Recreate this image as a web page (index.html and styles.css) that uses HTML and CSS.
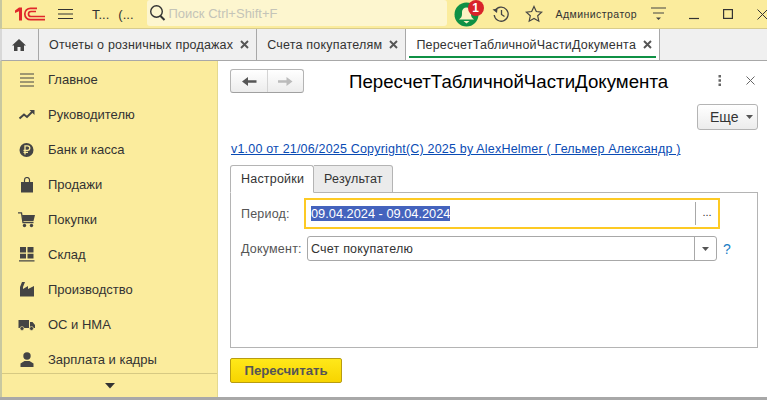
FILE: index.html
```html
<!DOCTYPE html>
<html lang="ru">
<head>
<meta charset="utf-8">
<title>ПересчетТабличнойЧастиДокумента</title>
<link rel="stylesheet" href="styles.css">
</head>
<body>
<div class="app">
  <header class="topbar">
    <svg class="logo" width="30" height="14" viewBox="0 0 30 14"><path d="M0 3.500L4 .5H7V13.500H4V4.200L0 6z" fill="#e0272b"/><g fill="none" stroke="#e0272b" stroke-width="1.700"><path d="M22 1.300H15.500a5.700 5.700 0 0 0 0 11.400H30"/><path d="M21 4.500H16a2.400 2.400 0 0 0 0 5H30"/></g></svg>
    <svg class="burger" width="15" height="12" viewBox="0 0 15 12"><path d="M0 1.500H15M0 6H15M0 10.500H15" stroke="#333" stroke-width="1.100"/></svg>
    <span class="title">Т...</span><span class="title second">(...</span>
    <div class="search">
      <svg width="18" height="18" viewBox="0 0 18 18"><circle cx="7.500" cy="7.500" r="5.800" fill="none" stroke="#333" stroke-width="1.400"/><path d="M11.500 12L15.500 16" stroke="#333" stroke-width="2"/></svg>
      <span>Поиск Ctrl+Shift+F</span>
    </div>
    <div class="bell">
      <svg width="25" height="25" viewBox="0 0 25 25"><circle cx="12.500" cy="12.500" r="12" fill="#0f9145"/><path d="M5 17.500c2-1.500 3-3 3-5.500v-2a4.500 4.500 0 0 1 9 0v2c0 2.500 1 4 3 5.500z" fill="#fbf3c4"/><path d="M9.500 19h6l-3 2.500z" fill="#fbf3c4"/></svg>
      <span class="badge">1</span>
    </div>
    <svg class="tool history" width="18" height="18" viewBox="0 0 18 18"><g fill="none" stroke="#444" stroke-width="1.300"><path d="M3.200 5.500A7 7 0 1 1 2.200 10"/><path d="M9.500 5v4.500l3 2"/></g><path d="M0.500 4.500L5.500 3.500L5 8z" fill="#444"/></svg>
    <svg class="tool star" width="18" height="18" viewBox="0 0 18 18"><path d="M9 1.500l2.300 5 5.400.6-4 3.700 1.100 5.400L9 13.500l-4.800 2.700 1.100-5.400-4-3.700 5.400-.6z" fill="none" stroke="#444" stroke-width="1.200"/></svg>
    <span class="user">Администратор</span>
    <svg class="tool menu" width="15" height="14" viewBox="0 0 15 14"><path d="M0 1H15M2 6H13" stroke="#444" stroke-width="1.200"/><path d="M5 10.500h5l-2.500 2.500z" fill="#444"/></svg>
    <svg class="tool min" width="10" height="12" viewBox="0 0 10 12"><path d="M0 10.500H10" stroke="#333" stroke-width="1.200"/></svg>
    <svg class="tool max" width="10" height="10" viewBox="0 0 10 10"><rect x=".6" y=".6" width="8.800" height="8.800" fill="none" stroke="#333" stroke-width="1.200"/></svg>
    <svg class="tool close" width="11" height="11" viewBox="0 0 11 11"><path d="M.5.500L10.500 10.500M10.500.500L.5 10.500" stroke="#333" stroke-width="1"/></svg>
  </header>
  <nav class="tabs">
    <div class="tab home"><svg width="14" height="12" viewBox="0 0 14 12"><path d="M7 0L14 6.500H12V12H8.500V8H5.500V12H2V6.500H0z" fill="#444"/></svg></div>
    <div class="tab"><span>Отчеты о розничных продажах</span><svg class="x" width="9" height="9" viewBox="0 0 9 9"><path d="M1 1L8 8M8 1L1 8" stroke="#555" stroke-width="1.900"/></svg></div>
    <div class="tab"><span>Счета покупателям</span><svg class="x" width="9" height="9" viewBox="0 0 9 9"><path d="M1 1L8 8M8 1L1 8" stroke="#555" stroke-width="1.900"/></svg></div>
    <div class="tab active"><span>ПересчетТабличнойЧастиДокумента</span><svg class="x" width="9" height="9" viewBox="0 0 9 9"><path d="M1 1L8 8M8 1L1 8" stroke="#555" stroke-width="1.900"/></svg></div>
  </nav>
  <main class="main">
    <aside class="sidebar">
      <ul class="sections">
        <li><svg width="16" height="14" viewBox="0 0 16 14"><path d="M1 1H15M1 5H15M1 9H15M1 13H15" stroke="#444" stroke-width="1"/></svg><span>Главное</span></li>
        <li><svg width="16" height="14" viewBox="0 0 16 14"><path d="M.5 10.500L5 6.500L8 9L14 3" fill="none" stroke="#444" stroke-width="2"/><path d="M10.500 2H15.500V7z" fill="#444"/></svg><span>Руководителю</span></li>
        <li><svg width="16" height="16" viewBox="0 0 16 16"><circle cx="7.500" cy="8" r="7" fill="#444"/><path d="M6 12.500V3.800H8.500a2.300 2.300 0 0 1 0 4.600H4.500M4.500 10.300H9" fill="none" stroke="#fbec9d" stroke-width="1.300"/></svg><span>Банк и касса</span></li>
        <li><svg width="16" height="16" viewBox="0 0 16 16"><path d="M2 5H14V15.500H2z" fill="#444"/><path d="M5.500 7V3a2.500 2.500 0 0 1 5 0V7" fill="none" stroke="#444" stroke-width="1.200"/></svg><span>Продажи</span></li>
        <li><svg width="18" height="16" viewBox="0 0 18 16"><path d="M0 .8H3.500L5 10.500H15.500" fill="none" stroke="#444" stroke-width="1.300"/><path d="M4 3H17L15.500 9H5z" fill="#444"/><circle cx="6.500" cy="13.500" r="1.700" fill="#444"/><circle cx="13.500" cy="13.500" r="1.700" fill="#444"/></svg><span>Покупки</span></li>
        <li><svg width="16" height="15" viewBox="0 0 16 15"><path d="M1 0H7V5.500H1zM8.500 0H14.500V5.500H8.500zM1 6.800H7V11.500H1zM8.500 6.800H14.500V11.500H8.500zM0 13.200H15.500V14.500H0z" fill="#444"/></svg><span>Склад</span></li>
        <li><svg width="16" height="15" viewBox="0 0 16 15"><path d="M1 14.500V5L3 0H6L4 5V7L9 4V7L15 4V14.500z" fill="#444"/></svg><span>Производство</span></li>
        <li><svg width="17" height="12" viewBox="0 0 17 12"><path d="M0 1H10.500V9H0zM11.500 3H14L16.500 6V9H11.500z" fill="#444"/><circle cx="3.500" cy="9.500" r="2" fill="#444" stroke="#fbec9d" stroke-width=".6"/><circle cx="13" cy="9.500" r="2" fill="#444" stroke="#fbec9d" stroke-width=".6"/></svg><span>ОС и НМА</span></li>
        <li><svg width="14" height="15" viewBox="0 0 14 15"><circle cx="7" cy="4" r="3.700" fill="#444"/><path d="M.5 15V11.500L4.500 9H9.500L13.500 11.500V15z" fill="#444"/></svg><span>Зарплата и кадры</span></li>
      </ul>
      <div class="more"><svg width="10" height="6" viewBox="0 0 10 6"><path d="M0 0H10L5 5.500z" fill="#333"/></svg></div>
    </aside>
    <section class="content">
      <div class="head">
        <div class="nav-buttons">
          <button class="nav-btn"><svg width="15" height="11" viewBox="0 0 15 11"><path d="M0 5.500L6 1V4.300H14.500V6.700H6V10z" fill="#555"/></svg></button>
          <button class="nav-btn"><svg width="15" height="11" viewBox="0 0 15 11"><path d="M14.500 5.500L8.500 1V4.300H0V6.700H8.500V10z" fill="#bbb"/></svg></button>
        </div>
        <h1>ПересчетТабличнойЧастиДокумента</h1>
        <svg class="kebab" width="4" height="11" viewBox="0 0 4 11"><path d="M.5 0H3V2.500H.5zM.5 4.200H3V6.700H.5zM.5 8.400H3V10.900H.5z" fill="#666"/></svg>
        <svg class="head-close" width="9" height="9" viewBox="0 0 9 9"><path d="M.5.500L8.500 8.500M8.500.500L.5 8.500" stroke="#666" stroke-width="1"/></svg>
      </div>
      <div class="actions"><button class="more-btn">Еще<svg width="7" height="4" viewBox="0 0 7 4"><path d="M0 0H7L3.500 4z" fill="#555"/></svg></button></div>
      <a class="link" href="#">v1.00 от 21/06/2025 Copyright(C) 2025 by AlexHelmer ( Гельмер Александр )</a>
      <div class="form-tabs">
        <div class="ftab on">Настройки</div>
        <div class="ftab">Результат</div>
      </div>
      <div class="panel">
        <div class="row">
          <label>Период:</label>
          <div class="period">
            <div class="period-value"><span class="selected">09.04.2024 - 09.04.2024</span></div>
            <div class="dots">...</div>
          </div>
        </div>
        <div class="row second-row">
          <label>Документ:</label>
          <div class="select">
            <div class="select-value">Счет покупателю</div>
            <div class="arrow"><svg width="7" height="4" viewBox="0 0 7 4"><path d="M0 0H7L3.500 4z" fill="#555"/></svg></div>
          </div>
          <span class="help">?</span>
        </div>
      </div>
      <button class="primary">Пересчитать</button>
    </section>
  </main>
</div>
</body>
</html>
```
FILE: styles.css
```css
* { box-sizing: border-box; }
html, body { margin: 0; padding: 0; height: 100%; overflow: hidden; background: #fff; }
body { font-family: "Liberation Sans", Arial, sans-serif; font-size: 12px; color: #333; }
.app { width: 767px; height: 400px; display: flex; flex-direction: column; border-bottom: 3px solid #a8a8a8; }
.topbar { height: 29px; flex: none; display: flex; align-items: center; background: #fbec9d; border-left: 2px solid #c8c8a0; border-bottom: 1px solid #d8cc8c; }
.logo { margin-left: 13px; flex: none; }
.burger { margin-left: 13px; flex: none; }
.title { margin-left: 19px; font-size: 13px; }
.title.second { margin-left: 9px; }
.search { margin-left: 13px; width: 300px; height: 26px; background: #fdf6cf; border-radius: 3px; display: flex; align-items: center; padding-left: 2px; gap: 2px; font-size: 13px; color: #c4c4b8; flex: none; margin-top: -2px; }
.bell { position: relative; margin-left: 7px; width: 25px; height: 25px; flex: none; }
.badge { position: absolute; top: -2px; right: -5px; width: 16px; height: 16px; border-radius: 50%; background: #d8232a; color: #fff; font-size: 12px; font-weight: bold; text-align: center; line-height: 16px; }
.tool { flex: none; }
.history { margin-left: 13px; }
.star { margin-left: 15px; }
.user { margin-left: 13px; font-size: 10.500px; letter-spacing: .45px; }
.menu { margin-left: 14px; }
.min { margin-left: 23px; }
.max { margin-left: 24px; }
.close { margin-left: 24px; }
.tabs { height: 32px; flex: none; display: flex; background: #f0f0f0; border-bottom: 1px solid #a8a8a8; border-left: 2px solid #d8d8d8; }
.tab { height: 31px; display: flex; align-items: center; padding: 0 7px 0 10px; border-right: 1px solid #a8a8a8; font-size: 12.500px; letter-spacing: .2px; white-space: nowrap; }
.tab.home { width: 37px; padding: 0 0 0 10px; }
.tab.active { background: #fff; position: relative; }
.tab.active::after { content: ""; position: absolute; left: 3px; right: 3px; bottom: 2px; height: 2px; background: #0f9145; }
.x { flex: none; margin-left: 7px; }
.main { flex: 1; display: flex; min-height: 0; }
.sidebar { width: 218px; flex: none; display: flex; flex-direction: column; background: #fbec9d; border-left: 2px solid #c8c8a0; border-right: 1px solid #e4d98f; }
.sections { list-style: none; margin: 0; padding: 1px 0 0 16px; flex: 1; overflow: hidden; }
.sections li { height: 35px; display: flex; align-items: center; }
.sections svg { width: 18px; flex: none; }
.sections span { margin-left: 12px; font-size: 13px; }
.more { height: 24px; flex: none; border-top: 1px solid #d6c983; display: flex; align-items: center; justify-content: center; }
.content { flex: 1; padding: 8px 9px 0 12px; display: flex; flex-direction: column; align-items: stretch; min-width: 0; }
.head { display: flex; align-items: center; height: 24px; margin-bottom: 11px; }
.nav-buttons { display: flex; width: 74px; height: 24px; border: 1px solid #b4b4b4; border-bottom-color: #a0a0a0; border-radius: 3px; background: linear-gradient(#fff, #ececec); flex: none; }
.nav-btn { width: 36px; flex: none; padding: 0; border: 0; background: none; display: flex; align-items: center; justify-content: center; }
.nav-btn + .nav-btn { border-left: 1px solid #d4d4d4; }
h1 { margin: 2px 0 0 45px; font-size: 18.700px; font-weight: normal; color: #000; white-space: nowrap; flex: none; }
.kebab { margin-left: 50px; margin-top: -2px; flex: none; }
.head-close { margin-left: 24px; margin-top: -2px; flex: none; }
.actions { display: flex; justify-content: flex-end; height: 26px; }
.more-btn { width: 61px; height: 26px; border: 1px solid #b4b4b4; border-radius: 3px; background: linear-gradient(#fff, #ececec); font: 14px "Liberation Sans", Arial, sans-serif; color: #333; padding: 0 0 0 12px; display: flex; align-items: center; gap: 7px; }
.link { margin-top: 12px; padding-left: 1px; font-size: 12.500px; letter-spacing: .19px; color: #0a4bb4; line-height: 14px; }
.form-tabs { display: flex; margin-top: 9px; position: relative; z-index: 1; height: 27px; }
.ftab { height: 28px; padding: 0 9px 0 10px; display: flex; align-items: center; border: 1px solid #b4b4b4; border-left: 0; border-radius: 0 3px 0 0; background: #ebebeb; font-size: 12.500px; letter-spacing: .2px; }
.ftab.on { background: #fff; border-left: 1px solid #b4b4b4; border-bottom-color: #fff; border-radius: 3px 3px 0 0; }
.panel { height: 156px; border: 1px solid #b4b4b4; padding-top: 5px; }
.row { display: flex; align-items: center; padding-left: 10px; }
label { width: 63px; flex: none; color: #555; font-size: 12.500px; letter-spacing: .2px; }
.period { width: 416px; height: 31px; border: 2px solid #fdca24; display: flex; align-items: center; background: #fff; padding: 2px 0 2px 5px; }
.period-value { flex: 1; }
.selected { background: #4463bd; color: #fff; font-size: 12.800px; line-height: 15px; display: inline-block; }
.dots { width: 23px; height: 23px; border-left: 1px solid #a8a8a8; text-align: center; font-size: 11px; line-height: 20px; }
.second-row { margin-top: 7px; }
.select { width: 410px; height: 25px; margin-left: 3px; border: 1px solid #a8a8a8; border-radius: 3px; display: flex; align-items: center; background: #fff; }
.select-value { flex: 1; padding-left: 3px; font-size: 12.500px; letter-spacing: .2px; }
.arrow { width: 22px; height: 100%; border-left: 1px solid #a8a8a8; display: flex; align-items: center; justify-content: center; }
.help { margin-left: 6px; color: #1a7dc4; font-size: 14px; }
.primary { align-self: flex-start; margin-top: 10px; width: 112px; height: 25px; border: 1px solid #b89c10; border-radius: 2px; background: linear-gradient(#ffe81a, #f7d400); color: #555; font: bold 13.200px "Liberation Sans", Arial, sans-serif; padding: 0; }
```
